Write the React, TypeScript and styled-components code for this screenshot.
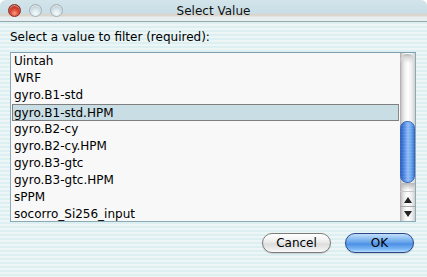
import React from "react";
import styled, { createGlobalStyle } from "styled-components";

const Global = createGlobalStyle`
  html, body { margin: 0; padding: 0; background: #ffffff; }
  body { font-family: "DejaVu Sans", "Liberation Sans", sans-serif; -webkit-font-smoothing: antialiased; }
`;

const Window = styled.div`
  width: 427px;
  height: 277px;
  display: flex;
  flex-direction: column;
  border-radius: 6px 6px 0 0;
  overflow: hidden;
  background: repeating-linear-gradient(to bottom, #eef5f6 0 2px, #dcf0f2 2px 4px);
`;

const TitleBar = styled.div`
  height: 21px;
  flex: none;
  display: grid;
  grid-template-columns: 1fr auto 1fr;
  align-items: center;
  border-bottom: 1px solid #97a7ad;
  background: linear-gradient(
    to bottom,
    #d3e4ea 0px,
    #c9dee6 13px,
    #d8d6cf 14px,
    #ddd7ce 16px,
    #e6eef0 17px,
    #e9f0f2 21px
  );
`;

const Lights = styled.div`
  display: flex;
  gap: 8px;
  padding-left: 8px;
  padding-top: 0px;
`;

const Light = styled.div<{ $red?: boolean }>`
  width: 13px;
  height: 13px;
  border-radius: 50%;
  box-sizing: border-box;
  border: 1px solid ${(p) => (p.$red ? "#8a2a1e" : "#a3b1b6")};
  background: ${(p) =>
    p.$red
      ? "radial-gradient(circle at 50% 75%, #f6a08a 0, #e0523c 35%, #b2281a 75%, #8c1f14 100%)"
      : "radial-gradient(circle at 50% 75%, #f4fbfc 0, #d9e7eb 40%, #b9c8cd 80%, #a8b7bc 100%)"};
  box-shadow: inset 0 1px 1px rgba(255, 255, 255, 0.6);
`;

const Title = styled.div`
  font-size: 12px;
  color: #111;
  line-height: 14px;
  padding-top: 0px;
`;

const Content = styled.div`
  flex: 1;
  display: flex;
  flex-direction: column;
  padding: 8px 11px 0 10px;
`;

const Label = styled.div`
  font-size: 12px;
  line-height: 15px;
  color: #000;
  height: 15px;
  margin-bottom: 7px;
`;

const ListBox = styled.div`
  height: 170px;
  box-sizing: border-box;
  display: flex;
  border: 1px solid #8ea9b6;
  border-top-color: #7f9fb0;
  background: #f8f8f8;
  overflow: hidden;
`;

const Rows = styled.div`
  flex: 1;
  display: flex;
  flex-direction: column;
  padding: 0 1px 0 1px;
  overflow: hidden;
`;

const Row = styled.div<{ $selected?: boolean }>`
  height: 17px;
  flex: none;
  box-sizing: border-box;
  font-size: 12px;
  line-height: 15px;
  color: #000;
  padding: 1px 0 0 ${(p) => (p.$selected ? "1px" : "2px")};
  white-space: nowrap;
  ${(p) =>
    p.$selected
      ? `background: #c9dde4; border: 1px solid #7f7f7f; border-right-color:#8a8a8a; line-height: 14px; padding-top: 1px;`
      : ""}
`;

const ScrollBar = styled.div`
  width: 15px;
  flex: none;
  display: flex;
  flex-direction: column;
  background: linear-gradient(
    to right,
    #a9a9a9 0px,
    #d4d4d4 2px,
    #f2f2f2 5px,
    #ffffff 8px,
    #ececec 12px,
    #cfcfcf 15px
  );
`;

const TrackCap = styled.div`
  height: 9px;
  flex: none;
  margin-top: 1px;
  border-radius: 7px 7px 0 0;
  background: linear-gradient(to bottom, #b4b4b4 0, #d8d8d8 3px, rgba(255,255,255,0) 9px);
`;

const Track = styled.div`
  flex: 1;
  display: flex;
  flex-direction: column;
`;

const Thumb = styled.div`
  height: 62px;
  flex: none;
  box-sizing: border-box;
  border-radius: 7px;
  border: 1px solid #3a67b8;
  background:
    repeating-linear-gradient(to bottom, rgba(255,255,255,0.08) 0 1px, rgba(255,255,255,0) 1px 3px),
    linear-gradient(
      to right,
      #2a5fc9 0px,
      #4d86e3 3px,
      #8fbdf4 7px,
      #6fa5ee 10px,
      #3f79db 13px
    );
`;

const ThumbShadow = styled.div`
  height: 7px;
  flex: none;
  border-radius: 0 0 7px 7px;
  background: linear-gradient(to bottom, #b8b8b8, rgba(220,220,220,0));
`;

const ArrowBtn = styled.div<{ $down?: boolean }>`
  height: 15px;
  flex: none;
  display: flex;
  align-items: center;
  justify-content: center;
  border-top: 1px solid ${(p) => (p.$down ? "#a8a8a8" : "#c8c8c8")};
  box-sizing: border-box;
`;

const Tri = styled.div<{ $down?: boolean }>`
  width: 0;
  height: 0;
  border-left: 4px solid transparent;
  border-right: 4px solid transparent;
  ${(p) =>
    p.$down
      ? "border-top: 6px solid #222; margin-top: 0px;"
      : "border-bottom: 6px solid #222; margin-top: 1px;"}
`;

const ButtonRow = styled.div`
  display: flex;
  justify-content: flex-end;
  gap: 14px;
  padding-top: 11px;
  padding-right: 2px;
`;

const Button = styled.button<{ $primary?: boolean }>`
  width: 69px;
  height: 20px;
  box-sizing: border-box;
  border-radius: 10px;
  font-family: "DejaVu Sans", "Liberation Sans", sans-serif;
  font-size: 12px;
  line-height: 16px;
  padding: 0;
  color: #000;
  border: 1px solid ${(p) => (p.$primary ? "#27488a" : "#7b7b7b")};
  background: ${(p) =>
    p.$primary
      ? "linear-gradient(to bottom, #c4def8 0%, #8fc0f3 25%, #5e9de9 50%, #4a8ee5 55%, #7fbaf6 85%, #b6dcfb 100%)"
      : "linear-gradient(to bottom, #ffffff 0%, #f4f4f4 30%, #e6e6e6 50%, #dcdcdc 55%, #eeeeee 85%, #fbfbfb 100%)"};
  box-shadow: 0 1px 1px rgba(0, 0, 0, 0.15);
`;

const items = [
  "Uintah",
  "WRF",
  "gyro.B1-std",
  "gyro.B1-std.HPM",
  "gyro.B2-cy",
  "gyro.B2-cy.HPM",
  "gyro.B3-gtc",
  "gyro.B3-gtc.HPM",
  "sPPM",
  "socorro_Si256_input",
];

export default function App() {
  const selected = 3;
  const thumbOffset = 58;
  return (
    <>
      <Global />
      <Window>
        <TitleBar>
          <Lights>
            <Light $red />
            <Light />
            <Light />
          </Lights>
          <Title>Select Value</Title>
          <div />
        </TitleBar>
        <Content>
          <Label>Select a value to filter (required):</Label>
          <ListBox>
            <Rows>
              {items.map((it, i) => (
                <Row key={it} $selected={i === selected}>
                  {it}
                </Row>
              ))}
            </Rows>
            <ScrollBar>
              <TrackCap />
              <Track>
                <div style={{ height: thumbOffset, flex: "none" }} />
                <Thumb />
                <ThumbShadow />
              </Track>
              <ArrowBtn>
                <Tri />
              </ArrowBtn>
              <ArrowBtn $down>
                <Tri $down />
              </ArrowBtn>
            </ScrollBar>
          </ListBox>
          <ButtonRow>
            <Button>Cancel</Button>
            <Button $primary>OK</Button>
          </ButtonRow>
        </Content>
      </Window>
    </>
  );
}
